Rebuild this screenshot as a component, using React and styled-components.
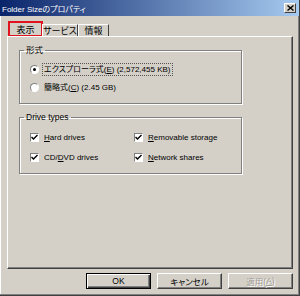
import React from "react";
import styled, { createGlobalStyle } from "styled-components";

const GlobalStyle = createGlobalStyle`
  html, body {
    margin: 0;
    padding: 0;
    background: #d4d0c8;
  }
  body {
    font-family: "Liberation Sans", "Noto Sans CJK JP", sans-serif;
    font-feature-settings: "palt" 1;
  }
`;

const Window = styled.div`
  width: 300px;
  height: 296px;
  box-sizing: border-box;
  background: #d4d0c8;
  display: flex;
  flex-direction: column;
  border-right: 1px solid #404040;
  border-bottom: 1px solid #404040;
  box-shadow: inset -1px -1px 0 #808080, inset 1px 0 0 #fff;
  color: #000;
  font-size: 8px;
`;

const TitleBar = styled.div`
  height: 16px;
  flex: none;
  display: flex;
  align-items: center;
  justify-content: space-between;
  padding: 0 3px 0 2px;
  background: linear-gradient(to right, #0a246a, #a6caf0);
  color: #fff;
  font-size: 8px;
`;

const CloseButton = styled.div`
  width: 12px;
  height: 10px;
  box-sizing: border-box;
  background: #d4d0c8;
  border: 1px solid;
  border-color: #fff #404040 #404040 #fff;
  display: flex;
  align-items: center;
  justify-content: center;
`;

const Body = styled.div`
  flex: 1;
  display: flex;
  flex-direction: column;
  padding: 6px 6px 0 7px;
`;

const TabRow = styled.div`
  display: flex;
  align-items: flex-end;
  height: 14px;
  padding-left: 2px;
`;

const Tab = styled.div`
  box-sizing: border-box;
  height: ${(p) => (p.$active ? "14px" : "12px")};
  width: ${(p) => p.$w}px;
  display: flex;
  align-items: center;
  justify-content: center;
  white-space: nowrap;
  border: 1px solid;
  border-bottom: none;
  border-color: #fff #404040 transparent #fff;
  font-size: 9px;
  ${(p) => p.$active && "outline: 2px solid #e0141e; outline-offset: -1px;"}
`;

const Panel = styled.div`
  height: 233px;
  box-sizing: border-box;
  border: 1px solid;
  border-color: #fff #404040 #404040 #fff;
  box-shadow: inset -1px -1px 0 #808080;
  padding: 8px 0 0 11px;
  display: flex;
  flex-direction: column;
  gap: 8px;
`;

const Group = styled.fieldset`
  margin: 0;
  width: 223px;
  box-sizing: border-box;
  padding: ${(p) => p.$pad};
  border: 1px solid #808080;
  box-shadow: inset 1px 1px 0 #fff, 1px 1px 0 #fff;
  min-inline-size: 0;
`;

const Legend = styled.legend`
  margin-left: -6px;
  padding: 0 2px;
  line-height: 11px;
  font-size: 8.5px;
`;

const RadioList = styled.div`
  display: flex;
  flex-direction: column;
  gap: 6px;
`;

const Option = styled.div`
  display: flex;
  align-items: center;
  height: 12px;
  gap: 3px;
`;

const Radio = styled.span`
  width: 9px;
  height: 9px;
  flex: none;
  border-radius: 50%;
  box-sizing: border-box;
  background: #fff;
  border: 1px solid;
  border-color: #808080 #fff #fff #808080;
  display: flex;
  align-items: center;
  justify-content: center;
  &::after {
    content: "";
    width: 3px;
    height: 3px;
    border-radius: 50%;
    background: ${(p) => (p.$checked ? "#000" : "transparent")};
  }
`;

const Label = styled.span`
  padding: 0 1px;
  line-height: 11px;
  border: 1px dotted ${(p) => (p.$focus ? "#555" : "transparent")};
  white-space: nowrap;
`;

const CheckGrid = styled.div`
  display: grid;
  grid-template-columns: 104px 1fr;
  row-gap: 8px;
`;

const Box = styled.span`
  width: 9px;
  height: 9px;
  flex: none;
  box-sizing: border-box;
  background: #fff;
  border: 1px solid;
  border-color: #808080 #fff #fff #808080;
  display: flex;
  align-items: center;
  justify-content: center;
`;

const Buttons = styled.div`
  display: flex;
  justify-content: flex-end;
  gap: 6px;
  margin-top: 4px;
`;

const Button = styled.div`
  width: 65px;
  height: 16px;
  box-sizing: border-box;
  display: flex;
  align-items: center;
  justify-content: center;
  font-size: 8.5px;
  border: 1px solid;
  border-color: ${(p) => (p.$default ? "#000" : "#fff #404040 #404040 #fff")};
  box-shadow: ${(p) =>
    p.$default
      ? "inset 1px 1px 0 #fff, inset -1px -1px 0 #404040, inset -2px -2px 0 #808080"
      : "inset -1px -1px 0 #808080"};
  color: ${(p) => (p.$disabled ? "#a09c94" : "#000")};
  text-shadow: ${(p) => (p.$disabled ? "1px 1px 0 #fff" : "none")};
`;

const Check = () => (
  <svg width="7" height="7" viewBox="0 0 7 7">
    <path d="M0.5 3 L2.5 5 L6.5 1" fill="none" stroke="#000" strokeWidth="1.4" />
  </svg>
);

const drives = [
  ["H", "ard drives"],
  ["R", "emovable storage"],
  ["CD/", "D", "VD drives"],
  ["N", "etwork shares"],
];

export default function App() {
  return (
    <>
      <GlobalStyle />
      <Window>
        <TitleBar>
          <span>Folder Sizeのプロパティ</span>
          <CloseButton>
            <svg width="7" height="6" viewBox="0 0 7 6">
              <path d="M0.5 0.5 L6.5 5.5 M6.5 0.5 L0.5 5.5" stroke="#000" strokeWidth="1.4" />
            </svg>
          </CloseButton>
        </TitleBar>
        <Body>
          <TabRow>
            <Tab $active $w={33}>表示</Tab>
            <Tab $w={36}>サービス</Tab>
            <Tab $w={31}>情報</Tab>
          </TabRow>
          <Panel>
            <Group $pad="7px 0 10px 10px">
              <Legend>形式</Legend>
              <RadioList>
                <Option>
                  <Radio $checked />
                  <Label $focus>
                    エクスプローラ式(<u>E</u>) (2,572,455 KB)
                  </Label>
                </Option>
                <Option>
                  <Radio />
                  <Label>
                    簡略式(<u>C</u>) (2.45 GB)
                  </Label>
                </Option>
              </RadioList>
            </Group>
            <Group $pad="8px 0 10px 10px">
              <Legend>Drive types</Legend>
              <CheckGrid>
                {drives.map((d, i) => (
                  <Option key={i}>
                    <Box>
                      <Check />
                    </Box>
                    <Label>
                      {d.length === 2 ? (
                        <>
                          <u>{d[0]}</u>
                          {d[1]}
                        </>
                      ) : (
                        <>
                          {d[0]}
                          <u>{d[1]}</u>
                          {d[2]}
                        </>
                      )}
                    </Label>
                  </Option>
                ))}
              </CheckGrid>
            </Group>
          </Panel>
          <Buttons>
            <Button $default>OK</Button>
            <Button>キャンセル</Button>
            <Button $disabled>
              適用(<u>A</u>)
            </Button>
          </Buttons>
        </Body>
      </Window>
    </>
  );
}
